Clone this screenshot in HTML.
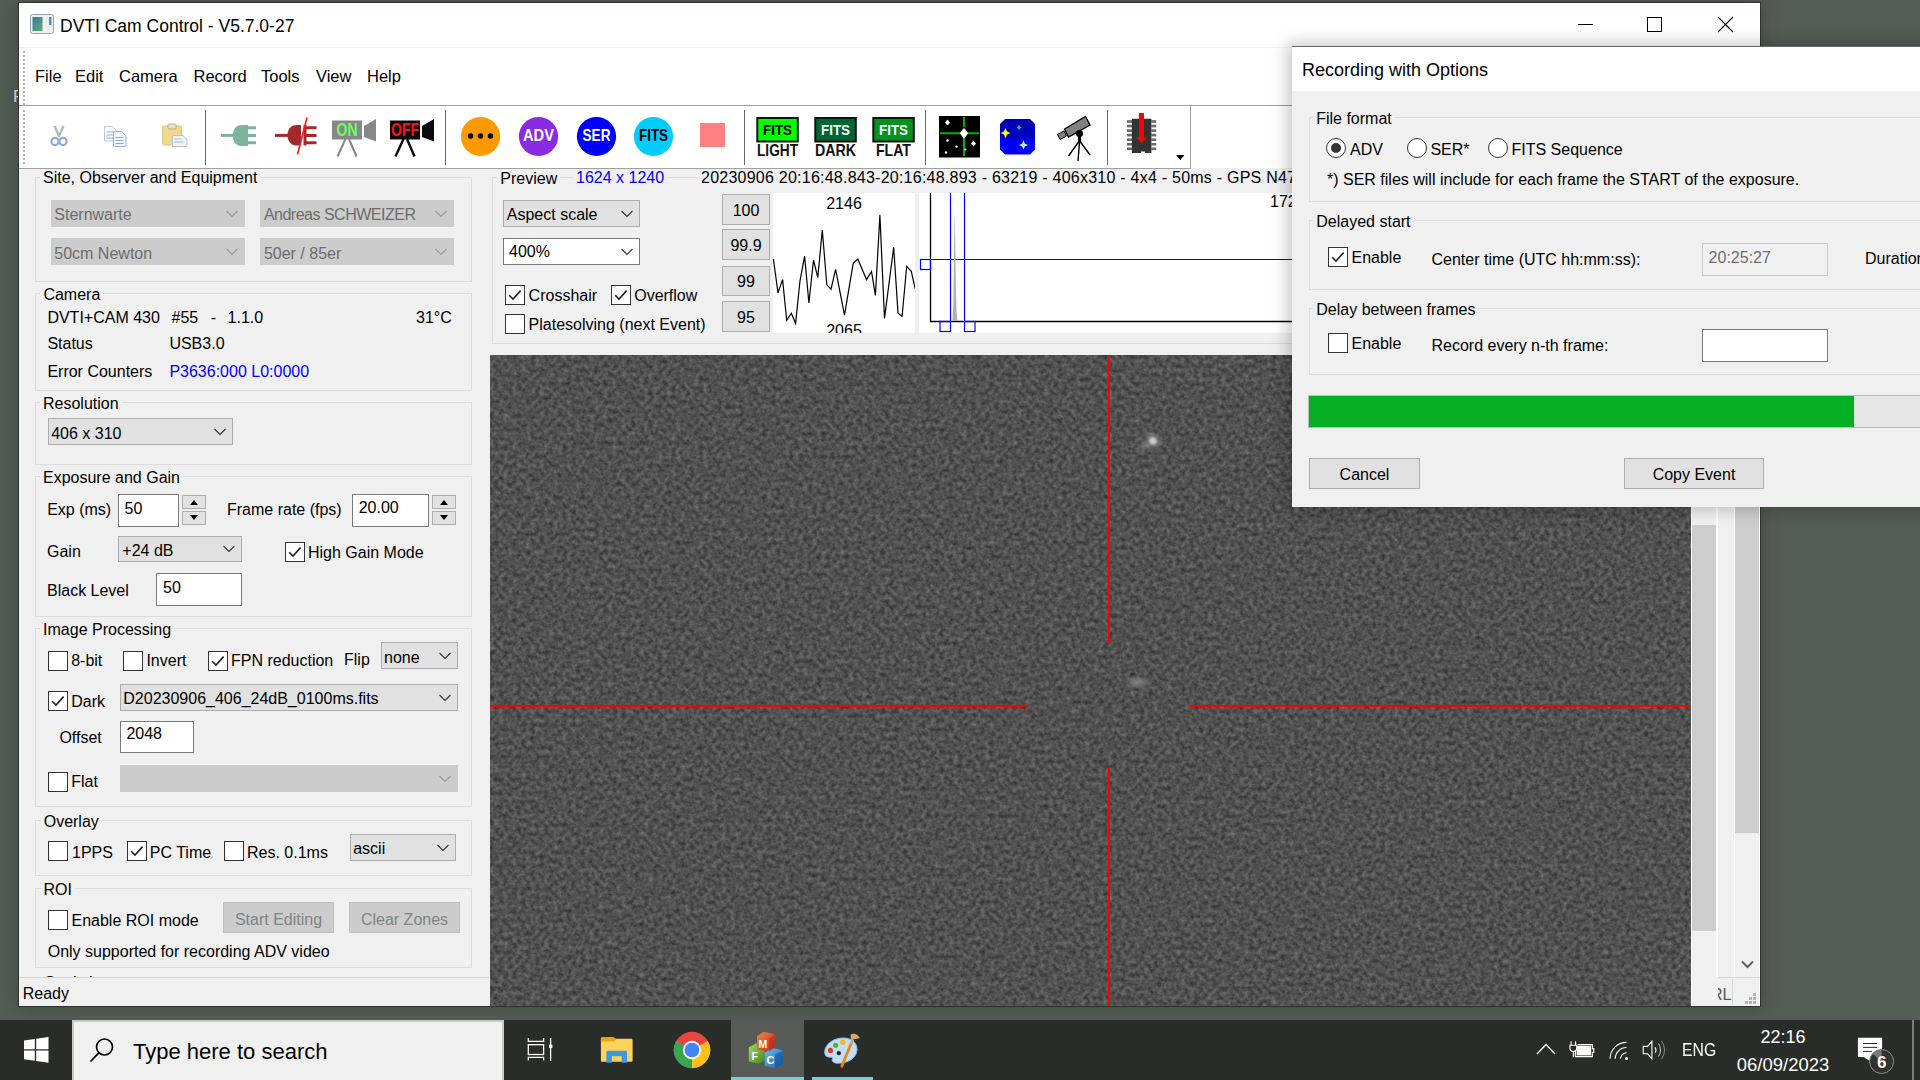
<!DOCTYPE html><html><head><meta charset="utf-8"><title>DVTI Cam Control</title><style>
*{margin:0;padding:0;box-sizing:border-box}
html,body{width:1920px;height:1080px;overflow:hidden}
body{position:relative;background:#535d53;font-family:"Liberation Sans",sans-serif;font-size:16px;color:#000}
.a{position:absolute}
.t{position:absolute;white-space:nowrap;line-height:16px;font-size:16px}
.g{position:absolute;border:1px solid #dcdcdc}
.gl{background:#f0f0f0}
.cb{position:absolute;width:20px;height:20px;border:1px solid #333;background:#fff}
.sp{background:#e1e1e1;border:1px solid #adadad}
.rd{position:absolute;width:20px;height:20px;border:1px solid #333;border-radius:50%;background:#fff}
</style></head><body>
<div class="t" style="left:13px;top:88px;font-size:17px;line-height:17px;color:#e0e0e0">F</div>
<div class="a" style="left:18px;top:2px;width:1743px;height:1005px;box-shadow:0 0 16px 1px rgba(0,0,0,0.22)"></div>
<div class="a" style="left:18px;top:2px;width:1743px;height:1005px;background:#2e342f"></div>
<div class="a" style="left:19px;top:3px;width:1741px;height:1003px;background:#f0f0f0"></div>
<div class="a" style="left:19px;top:3px;width:1741px;height:44px;background:#fff"></div>
<svg class="a" style="left:30px;top:14px" width="24" height="20" viewBox="0 0 24 20"><rect x="0.5" y="0.5" width="23" height="19" rx="2" fill="#eef0f2" stroke="#9aa3aa"/><defs><linearGradient id="gi" x1="0" y1="0" x2="1" y2="1"><stop offset="0" stop-color="#3a78a8"/><stop offset="1" stop-color="#58b068"/></linearGradient></defs><rect x="2.5" y="3" width="10" height="14" fill="url(#gi)"/><rect x="19" y="3" width="2.5" height="8" fill="#4a90c8"/></svg>
<div class="t" style="left:60px;top:17px;font-size:17.5px;line-height:18px">DVTI Cam Control - V5.7.0-27</div>
<div class="a" style="left:1578px;top:24px;width:15px;height:1px;background:#000"></div>
<div class="a" style="left:1647px;top:17px;width:15px;height:15px;border:1px solid #000"></div>
<svg class="a" style="left:1717px;top:16px" width="17" height="17" viewBox="0 0 17 17"><path d="M1 1 L16 16 M16 1 L1 16" stroke="#000" stroke-width="1.1"/></svg>
<div class="a" style="left:19px;top:47px;width:1741px;height:58px;background:#fff"></div>
<div class="a" style="left:19px;top:47px;width:1741px;height:1px;background:#eef3fb"></div>
<div class="a" style="left:23px;top:51px;width:2px;height:2px;background:#b4b4b4"></div>
<div class="a" style="left:23px;top:55px;width:2px;height:2px;background:#b4b4b4"></div>
<div class="a" style="left:23px;top:59px;width:2px;height:2px;background:#b4b4b4"></div>
<div class="a" style="left:23px;top:63px;width:2px;height:2px;background:#b4b4b4"></div>
<div class="a" style="left:23px;top:67px;width:2px;height:2px;background:#b4b4b4"></div>
<div class="a" style="left:23px;top:71px;width:2px;height:2px;background:#b4b4b4"></div>
<div class="a" style="left:23px;top:75px;width:2px;height:2px;background:#b4b4b4"></div>
<div class="a" style="left:23px;top:79px;width:2px;height:2px;background:#b4b4b4"></div>
<div class="a" style="left:23px;top:83px;width:2px;height:2px;background:#b4b4b4"></div>
<div class="a" style="left:23px;top:87px;width:2px;height:2px;background:#b4b4b4"></div>
<div class="a" style="left:23px;top:91px;width:2px;height:2px;background:#b4b4b4"></div>
<div class="a" style="left:23px;top:95px;width:2px;height:2px;background:#b4b4b4"></div>
<div class="a" style="left:23px;top:99px;width:2px;height:2px;background:#b4b4b4"></div>
<div class="a" style="left:23px;top:103px;width:2px;height:2px;background:#b4b4b4"></div>
<div class="t " style="left:35.00px;top:68px;font-size:16.5px">File</div>
<div class="t " style="left:75.00px;top:68px;font-size:16.5px">Edit</div>
<div class="t " style="left:119.00px;top:68px;font-size:16.5px">Camera</div>
<div class="t " style="left:193.50px;top:68px;font-size:16.5px">Record</div>
<div class="t " style="left:261.00px;top:68px;font-size:16.5px">Tools</div>
<div class="t " style="left:316.00px;top:68px;font-size:16.5px">View</div>
<div class="t " style="left:367.00px;top:68px;font-size:16.5px">Help</div>
<div class="a" style="left:19px;top:105px;width:1741px;height:1px;background:#a0a0a0"></div>
<div class="a" style="left:19px;top:106px;width:1741px;height:62px;background:#fff"></div>
<div class="a" style="left:19px;top:168px;width:1172px;height:1px;background:#a0a0a0"></div>
<div class="a" style="left:1190px;top:105px;width:1px;height:64px;background:#a0a0a0"></div>
<div class="a" style="left:23px;top:110px;width:2px;height:2px;background:#b4b4b4"></div>
<div class="a" style="left:23px;top:114px;width:2px;height:2px;background:#b4b4b4"></div>
<div class="a" style="left:23px;top:118px;width:2px;height:2px;background:#b4b4b4"></div>
<div class="a" style="left:23px;top:122px;width:2px;height:2px;background:#b4b4b4"></div>
<div class="a" style="left:23px;top:126px;width:2px;height:2px;background:#b4b4b4"></div>
<div class="a" style="left:23px;top:130px;width:2px;height:2px;background:#b4b4b4"></div>
<div class="a" style="left:23px;top:134px;width:2px;height:2px;background:#b4b4b4"></div>
<div class="a" style="left:23px;top:138px;width:2px;height:2px;background:#b4b4b4"></div>
<div class="a" style="left:23px;top:142px;width:2px;height:2px;background:#b4b4b4"></div>
<div class="a" style="left:23px;top:146px;width:2px;height:2px;background:#b4b4b4"></div>
<div class="a" style="left:23px;top:150px;width:2px;height:2px;background:#b4b4b4"></div>
<div class="a" style="left:23px;top:154px;width:2px;height:2px;background:#b4b4b4"></div>
<div class="a" style="left:23px;top:158px;width:2px;height:2px;background:#b4b4b4"></div>
<div class="a" style="left:23px;top:162px;width:2px;height:2px;background:#b4b4b4"></div>
<div class="a" style="left:205px;top:110px;width:1px;height:55px;background:#6a6a6a"></div>
<div class="a" style="left:445px;top:110px;width:1px;height:55px;background:#6a6a6a"></div>
<div class="a" style="left:744px;top:110px;width:1px;height:55px;background:#6a6a6a"></div>
<div class="a" style="left:925px;top:110px;width:1px;height:55px;background:#6a6a6a"></div>
<div class="a" style="left:1107px;top:110px;width:1px;height:55px;background:#6a6a6a"></div>
<svg class="a" style="left:50px;top:124px" width="18" height="25" viewBox="0 0 18 25"><path d="M4.5 2 L9.5 13 M13.5 2 L8.5 13" stroke="#b4b8bc" stroke-width="2.4" fill="none"/><circle cx="5" cy="17.5" r="3.6" fill="none" stroke="#8fa8e0" stroke-width="2.2"/><circle cx="13" cy="17.5" r="3.6" fill="none" stroke="#8fa8e0" stroke-width="2.2"/></svg>
<svg class="a" style="left:103px;top:125px" width="26" height="23" viewBox="0 0 26 23"><path d="M1.5 1.5 H9.5 L13 5 V16 H1.5Z" fill="#f4f7fc" stroke="#b9c8e6"/><path d="M3.5 7h7M3.5 10h7M3.5 13h7" stroke="#9fb5e6" stroke-width="1"/><path d="M10.5 6.5 H18.5 L23 11 V21.5 H10.5Z" fill="#f4f7fc" stroke="#98b0e4"/><path d="M12.5 12.5h8M12.5 15.5h8M12.5 18.5h8" stroke="#8aa6e0" stroke-width="1.2"/></svg>
<svg class="a" style="left:161px;top:123px" width="28" height="25" viewBox="0 0 28 25"><rect x="1.5" y="3" width="19" height="19" rx="1.5" fill="#f2d88a" stroke="#d9c48a"/><rect x="7" y="1" width="8" height="5" rx="1" fill="#e8e0c0" stroke="#bfb38a"/><path d="M11.5 12.5 H22 L26 16.5 V23.5 H11.5Z" fill="#eef1f6" stroke="#b8bfcc"/><path d="M13.5 16h7M13.5 19h9" stroke="#b0b8c8"/></svg>
<svg class="a" style="left:219px;top:123px" width="40" height="25" viewBox="0 0 40 25"><path d="M2 12.4 H15" stroke="#7db49c" stroke-width="3"/><path d="M14 12.4 C14 5 18 2 23 2 H29 V23 H23 C18 23 14 20 14 12.4Z" fill="#7db49c"/><path d="M28 4.8 H37 M28 12.4 H37 M28 19.8 H37" stroke="#7db49c" stroke-width="3"/></svg>
<svg class="a" style="left:273px;top:115px" width="48" height="42" viewBox="0 0 48 42"><path d="M2 20.4 H16" stroke="#a4282c" stroke-width="3"/><path d="M14.5 20.4 C14.5 13 19 10 24 10 H28 V30.5 H24 C19 30.5 14.5 27 14.5 20.4Z" fill="#a4282c"/><path d="M32 10 V30.5" stroke="#a4282c" stroke-width="3"/><path d="M31 12.7 H43.5 M31 20.4 H43.5 M31 27.8 H43.5" stroke="#a4282c" stroke-width="3"/><path d="M34 2.5 L24.5 39.5" stroke="#ff1a1a" stroke-width="1.6"/></svg>
<svg class="a" style="left:331px;top:117px" width="48" height="42" viewBox="0 0 48 42"><rect x="1" y="3.5" width="30" height="19" fill="#878787"/><path d="M33 9 L45 2 V24.5 L33 20Z" fill="#878787"/><path d="M14.5 22 L6.5 39.5 M18 22 L25.5 39.5" stroke="#878787" stroke-width="2"/><text x="16" y="18.6" text-anchor="middle" font-family="Liberation Sans" font-weight="bold" font-size="17.5" fill="#66ff66" textLength="21" lengthAdjust="spacingAndGlyphs">ON</text></svg>
<svg class="a" style="left:389px;top:117px" width="48" height="42" viewBox="0 0 48 42"><rect x="1" y="3.5" width="30" height="19" fill="#0a0a0a"/><path d="M33 9 L45 2 V24.5 L33 20Z" fill="#0a0a0a"/><path d="M14.5 22 L6.5 39.5 M18 22 L25.5 39.5" stroke="#0a0a0a" stroke-width="2.4"/><text x="16" y="18.6" text-anchor="middle" font-family="Liberation Sans" font-weight="bold" font-size="17.5" fill="#ff1010" textLength="28" lengthAdjust="spacingAndGlyphs">OFF</text></svg>
<svg class="a" style="left:459.7px;top:115.5px" width="41" height="41" viewBox="0 0 41 41"><circle cx="20.5" cy="20.5" r="19.6" fill="#ff9900"/><circle cx="10.5" cy="20" r="2.8" fill="#000"/><circle cx="20.5" cy="20" r="2.8" fill="#000"/><circle cx="30.5" cy="20" r="2.8" fill="#000"/></svg>
<svg class="a" style="left:517.9px;top:115.5px" width="41" height="41" viewBox="0 0 41 41"><circle cx="20.5" cy="20.5" r="19.6" fill="#8a2be2"/><text x="20.5" y="25.3" text-anchor="middle" font-family="Liberation Sans" font-weight="bold" font-size="16.5" fill="#fff" textLength="31" lengthAdjust="spacingAndGlyphs">ADV</text></svg>
<svg class="a" style="left:575.9px;top:115.5px" width="41" height="41" viewBox="0 0 41 41"><circle cx="20.5" cy="20.5" r="19.6" fill="#0000ff"/><text x="20.5" y="25.3" text-anchor="middle" font-family="Liberation Sans" font-weight="bold" font-size="16.5" fill="#fff" textLength="28" lengthAdjust="spacingAndGlyphs">SER</text></svg>
<svg class="a" style="left:633.2px;top:115.5px" width="41" height="41" viewBox="0 0 41 41"><circle cx="20.5" cy="20.5" r="19.6" fill="#00ccff"/><text x="20.5" y="25.3" text-anchor="middle" font-family="Liberation Sans" font-weight="bold" font-size="16.5" fill="#000" textLength="29" lengthAdjust="spacingAndGlyphs">FITS</text></svg>
<div class="a" style="left:700px;top:123px;width:25px;height:24px;background:#ff8080"></div>
<svg class="a" style="left:756px;top:116px" width="44" height="42" viewBox="0 0 44 42"><rect x="1.3" y="2" width="40.5" height="23.5" fill="#00ff00" stroke="#111" stroke-width="2"/><text x="21.5" y="19" text-anchor="middle" font-family="Liberation Sans" font-weight="bold" font-size="15.5" fill="#000" textLength="29" lengthAdjust="spacingAndGlyphs">FITS</text><text x="21.5" y="40.2" text-anchor="middle" font-family="Liberation Sans" font-weight="bold" font-size="16.5" fill="#111" textLength="41" lengthAdjust="spacingAndGlyphs">LIGHT</text></svg>
<svg class="a" style="left:814px;top:116px" width="44" height="42" viewBox="0 0 44 42"><rect x="1.3" y="2" width="40.5" height="23.5" fill="#006633" stroke="#111" stroke-width="2"/><text x="21.5" y="19" text-anchor="middle" font-family="Liberation Sans" font-weight="bold" font-size="15.5" fill="#fff" textLength="29" lengthAdjust="spacingAndGlyphs">FITS</text><text x="21.5" y="40.2" text-anchor="middle" font-family="Liberation Sans" font-weight="bold" font-size="16.5" fill="#111" textLength="41" lengthAdjust="spacingAndGlyphs">DARK</text></svg>
<svg class="a" style="left:872px;top:116px" width="44" height="42" viewBox="0 0 44 42"><rect x="1.3" y="2" width="40.5" height="23.5" fill="#00931e" stroke="#111" stroke-width="2"/><text x="21.5" y="19" text-anchor="middle" font-family="Liberation Sans" font-weight="bold" font-size="15.5" fill="#fff" textLength="29" lengthAdjust="spacingAndGlyphs">FITS</text><text x="21.5" y="40.2" text-anchor="middle" font-family="Liberation Sans" font-weight="bold" font-size="16.5" fill="#111" textLength="35" lengthAdjust="spacingAndGlyphs">FLAT</text></svg>
<svg class="a" style="left:939px;top:116px" width="41" height="42" viewBox="0 0 41 42"><rect x="0" y="0" width="41" height="41.5" fill="#000"/><path d="M25 1 V11 M25 22 V40 M1 17.2 H21 M29 17.2 H40" stroke="#00b000" stroke-width="2"/><path d="M25 12 L29.3 17.2 L25 22.4 L20.7 17.2Z" fill="#fff"/><path d="M8.5 3.5 L11 6.5 L8.5 9.5 L6 6.5Z M34.5 24.5 L37 27.5 L34.5 30.5 L32 27.5Z" fill="#fff"/><circle cx="8.5" cy="24.5" r="1.2" fill="#fff"/><circle cx="17.5" cy="30.6" r="1.2" fill="#fff"/><circle cx="7" cy="36.5" r="1.2" fill="#fff"/><circle cx="26.4" cy="33.5" r="1" fill="#fff"/></svg>
<svg class="a" style="left:1000px;top:119px" width="36" height="36" viewBox="0 0 36 36"><defs><linearGradient id="sky" x1="0" y1="0" x2="0" y2="1"><stop offset="0" stop-color="#0000a8"/><stop offset="0.55" stop-color="#0000c8"/><stop offset="0.6" stop-color="#0000ff"/><stop offset="1" stop-color="#0000ff"/></linearGradient></defs><path d="M5 0 H30 L35 5 V30.5 L30 35.5 H5 L0 30.5 V5Z" fill="url(#sky)"/><path d="M5.5 9 L7 12.6 L10.5 14 L7 15.4 L5.5 19.5 L4 15.4 L0.8 14 L4 12.6Z" fill="#ffff00"/><path d="M19 6 L20 7.6 L21.5 8.5 L20 9.4 L19 11 L18 9.4 L16.5 8.5 L18 7.6Z" fill="#00d0d0"/><path d="M23.5 21.5 L24.8 24.6 L28 26 L24.8 27.4 L23.5 30.5 L22.2 27.4 L19 26 L22.2 24.6Z" fill="#b0ffb0"/></svg>
<svg class="a" style="left:1056px;top:115px" width="40" height="48" viewBox="0 0 40 48"><path d="M1.5 19.5 L8 16 L10.5 21 L4 24.5Z" fill="#808080" stroke="#000" stroke-width="1"/><path d="M8.5 14 L29.5 1.5 L34 10 L12.5 22Z" fill="#808080" stroke="#000" stroke-width="1.3"/><circle cx="23.5" cy="18.5" r="3.6" fill="#000"/><path d="M23.5 20 V27" stroke="#000" stroke-width="3"/><path d="M22.5 27 L12.5 41 M23.5 27 L22 46 M24.5 27 L34 40" stroke="#000" stroke-width="1.4"/></svg>
<svg class="a" style="left:1127px;top:112px" width="34" height="43" viewBox="0 0 34 43"><rect x="0" y="8.20" width="5" height="2.6" fill="#6a6a6a"/><rect x="24.4" y="8.20" width="4.8" height="2.6" fill="#6a6a6a"/><rect x="0" y="12.75" width="5" height="2.6" fill="#6a6a6a"/><rect x="24.4" y="12.75" width="4.8" height="2.6" fill="#6a6a6a"/><rect x="0" y="17.30" width="5" height="2.6" fill="#6a6a6a"/><rect x="24.4" y="17.30" width="4.8" height="2.6" fill="#6a6a6a"/><rect x="0" y="21.85" width="5" height="2.6" fill="#6a6a6a"/><rect x="24.4" y="21.85" width="4.8" height="2.6" fill="#6a6a6a"/><rect x="0" y="26.40" width="5" height="2.6" fill="#6a6a6a"/><rect x="24.4" y="26.40" width="4.8" height="2.6" fill="#6a6a6a"/><rect x="0" y="30.95" width="5" height="2.6" fill="#6a6a6a"/><rect x="24.4" y="30.95" width="4.8" height="2.6" fill="#6a6a6a"/><rect x="0" y="35.50" width="5" height="2.6" fill="#6a6a6a"/><rect x="24.4" y="35.50" width="4.8" height="2.6" fill="#6a6a6a"/><path d="M4.9 6.8 H24.4 V41 H18 V39.5 H14 V41 H4.9Z" fill="#333"/><rect x="12" y="1" width="5" height="25" fill="#ff0000"/><path d="M9 25.5 H20.2 L14.5 31Z" fill="#ff0000"/></svg>
<svg class="a" style="left:1176px;top:155px" width="9" height="6" viewBox="0 0 9 6"><path d="M0 0 H8.5 L4.25 5Z" fill="#000"/></svg>
<div class="a" style="left:19px;top:169px;width:1741px;height:808px;background:#f0f0f0"></div>
<div class="g" style="left:35px;top:177px;width:437px;height:105px;"></div>
<div class="t gl" style="left:40.00px;top:170px;padding:0 3px 0 3px">Site, Observer and Equipment</div>
<div class="a" style="left:51px;top:200px;width:194px;height:27px;background:#cccccc;border:1px solid #cccccc"></div>
<div class="t " style="left:54.30px;top:207px;color:#6d6d6d">Sternwarte</div>
<svg class="a" style="left:226px;top:210px" width="12" height="8" viewBox="0 0 12 8"><path d="M0.5 1 L6 6.5 L11.5 1" fill="none" stroke="#9a9a9a" stroke-width="1.1"/></svg>
<div class="a" style="left:260px;top:200px;width:194px;height:27px;background:#cccccc;border:1px solid #cccccc"></div>
<div class="t " style="left:263.90px;top:207px;color:#6d6d6d;letter-spacing:-0.5px">Andreas SCHWEIZER</div>
<svg class="a" style="left:435px;top:210px" width="12" height="8" viewBox="0 0 12 8"><path d="M0.5 1 L6 6.5 L11.5 1" fill="none" stroke="#9a9a9a" stroke-width="1.1"/></svg>
<div class="a" style="left:51px;top:238px;width:194px;height:27px;background:#cccccc;border:1px solid #cccccc"></div>
<div class="t " style="left:54.30px;top:245.5px;color:#6d6d6d">50cm Newton</div>
<svg class="a" style="left:226px;top:248px" width="12" height="8" viewBox="0 0 12 8"><path d="M0.5 1 L6 6.5 L11.5 1" fill="none" stroke="#9a9a9a" stroke-width="1.1"/></svg>
<div class="a" style="left:260px;top:238px;width:194px;height:27px;background:#cccccc;border:1px solid #cccccc"></div>
<div class="t " style="left:263.90px;top:245.5px;color:#6d6d6d">50er / 85er</div>
<svg class="a" style="left:435px;top:248px" width="12" height="8" viewBox="0 0 12 8"><path d="M0.5 1 L6 6.5 L11.5 1" fill="none" stroke="#9a9a9a" stroke-width="1.1"/></svg>
<div class="g" style="left:35px;top:293px;width:437px;height:98px;"></div>
<div class="t gl" style="left:40.40px;top:287.4px;padding:0 3px 0 3px">Camera</div>
<div class="t " style="left:47.40px;top:310px;">DVTI+CAM 430</div>
<div class="t " style="left:171.50px;top:310px;">#55</div>
<div class="t " style="left:210.80px;top:310px;">-</div>
<div class="t " style="left:227.60px;top:310px;">1.1.0</div>
<div class="t " style="left:416.00px;top:310px;">31°C</div>
<div class="t " style="left:47.40px;top:336px;">Status</div>
<div class="t " style="left:169.40px;top:336px;">USB3.0</div>
<div class="t " style="left:47.40px;top:364px;">Error Counters</div>
<div class="t " style="left:169.40px;top:364px;color:#0000ff">P3636:000 L0:0000</div>
<div class="g" style="left:35px;top:402px;width:437px;height:63px;"></div>
<div class="t gl" style="left:40.00px;top:396.3px;padding:0 3px 0 3px">Resolution</div>
<div class="a" style="left:48px;top:418px;width:185px;height:27px;background:#e1e1e1;border:1px solid #adadad"></div>
<div class="t " style="left:51.20px;top:425.7px;color:#000">406 x 310</div>
<svg class="a" style="left:214px;top:428px" width="12" height="8" viewBox="0 0 12 8"><path d="M0.5 1 L6 6.5 L11.5 1" fill="none" stroke="#333" stroke-width="1.1"/></svg>
<div class="g" style="left:35px;top:476px;width:437px;height:141px;"></div>
<div class="t gl" style="left:40.00px;top:470px;padding:0 3px 0 3px">Exposure and Gain</div>
<div class="t " style="left:47.20px;top:502px;">Exp (ms)</div>
<div class="a" style="left:118px;top:494px;width:61px;height:33px;background:#fff;border:1px solid #7a7a7a"></div>
<div class="t " style="left:124.60px;top:501px;">50</div>
<div class="a sp" style="left:182px;top:495px;width:24px;height:14px"><svg width="22" height="12" viewBox="0 0 22 12" style="position:absolute;left:0;top:0"><path d="M7 9 L11 4 L15 9Z" fill="#000"/></svg></div>
<div class="a sp" style="left:182px;top:511px;width:24px;height:14px"><svg width="22" height="12" viewBox="0 0 22 12" style="position:absolute;left:0;top:0"><path d="M7 3 L11 8 L15 3Z" fill="#000"/></svg></div>
<div class="t " style="left:227.00px;top:502px;">Frame rate (fps)</div>
<div class="a" style="left:352px;top:494px;width:77px;height:33px;background:#fff;border:1px solid #7a7a7a"></div>
<div class="t " style="left:358.70px;top:500.4px;">20.00</div>
<div class="a sp" style="left:432px;top:495px;width:24px;height:14px"><svg width="22" height="12" viewBox="0 0 22 12" style="position:absolute;left:0;top:0"><path d="M7 9 L11 4 L15 9Z" fill="#000"/></svg></div>
<div class="a sp" style="left:432px;top:511px;width:24px;height:14px"><svg width="22" height="12" viewBox="0 0 22 12" style="position:absolute;left:0;top:0"><path d="M7 3 L11 8 L15 3Z" fill="#000"/></svg></div>
<div class="t " style="left:47.00px;top:544px;">Gain</div>
<div class="a" style="left:118px;top:535.5px;width:124px;height:26.5px;background:#e1e1e1;border:1px solid #adadad"></div>
<div class="t " style="left:122.30px;top:543px;color:#000">+24 dB</div>
<svg class="a" style="left:223px;top:545.0px" width="12" height="8" viewBox="0 0 12 8"><path d="M0.5 1 L6 6.5 L11.5 1" fill="none" stroke="#333" stroke-width="1.1"/></svg>
<div class="cb" style="left:285px;top:542px"><svg width="20" height="20" viewBox="0 0 20 20" style="position:absolute;left:-1px;top:-1px"><path d="M4.2 10.2 L8 14 L15.6 5.6" fill="none" stroke="#222" stroke-width="1.6"/></svg></div>
<div class="t " style="left:308.00px;top:545px;">High Gain Mode</div>
<div class="t " style="left:47.00px;top:583px;">Black Level</div>
<div class="a" style="left:156px;top:573px;width:86px;height:33px;background:#fff;border:1px solid #7a7a7a"></div>
<div class="t " style="left:163.00px;top:580px;">50</div>
<div class="g" style="left:35px;top:628px;width:437px;height:179px;"></div>
<div class="t gl" style="left:40.10px;top:622px;padding:0 3px 0 3px">Image Processing</div>
<div class="cb" style="left:48px;top:651px"></div>
<div class="t " style="left:71.20px;top:653.4px;">8-bit</div>
<div class="cb" style="left:123px;top:651px"></div>
<div class="t " style="left:146.40px;top:653.4px;">Invert</div>
<div class="cb" style="left:208px;top:651px"><svg width="20" height="20" viewBox="0 0 20 20" style="position:absolute;left:-1px;top:-1px"><path d="M4.2 10.2 L8 14 L15.6 5.6" fill="none" stroke="#222" stroke-width="1.6"/></svg></div>
<div class="t " style="left:231.00px;top:653.4px;">FPN reduction</div>
<div class="t " style="left:344.00px;top:652.3px;">Flip</div>
<div class="a" style="left:381px;top:642px;width:77px;height:27px;background:#e1e1e1;border:1px solid #adadad"></div>
<div class="t " style="left:384.00px;top:649.7px;color:#000">none</div>
<svg class="a" style="left:439px;top:652px" width="12" height="8" viewBox="0 0 12 8"><path d="M0.5 1 L6 6.5 L11.5 1" fill="none" stroke="#333" stroke-width="1.1"/></svg>
<div class="cb" style="left:48px;top:691px"><svg width="20" height="20" viewBox="0 0 20 20" style="position:absolute;left:-1px;top:-1px"><path d="M4.2 10.2 L8 14 L15.6 5.6" fill="none" stroke="#222" stroke-width="1.6"/></svg></div>
<div class="t " style="left:71.20px;top:693.8px;">Dark</div>
<div class="a" style="left:120px;top:684px;width:338px;height:27px;background:#e1e1e1;border:1px solid #adadad"></div>
<div class="t " style="left:123.30px;top:691.4px;color:#000">D20230906_406_24dB_0100ms.fits</div>
<svg class="a" style="left:439px;top:694px" width="12" height="8" viewBox="0 0 12 8"><path d="M0.5 1 L6 6.5 L11.5 1" fill="none" stroke="#333" stroke-width="1.1"/></svg>
<div class="t " style="left:59.40px;top:730.3px;">Offset</div>
<div class="a" style="left:120px;top:720.5px;width:74px;height:32.5px;background:#fff;border:1px solid #7a7a7a"></div>
<div class="t " style="left:126.40px;top:726.2px;">2048</div>
<div class="cb" style="left:48px;top:772px"></div>
<div class="t " style="left:71.20px;top:774.4px;">Flat</div>
<div class="a" style="left:120px;top:765px;width:338px;height:27px;background:#cccccc;border:1px solid #cccccc"></div>
<svg class="a" style="left:439px;top:775px" width="12" height="8" viewBox="0 0 12 8"><path d="M0.5 1 L6 6.5 L11.5 1" fill="none" stroke="#9a9a9a" stroke-width="1.1"/></svg>
<div class="g" style="left:35px;top:820px;width:437px;height:56px;"></div>
<div class="t gl" style="left:40.70px;top:814px;padding:0 3px 0 3px">Overlay</div>
<div class="cb" style="left:48px;top:841px"></div>
<div class="t " style="left:72.00px;top:845px;">1PPS</div>
<div class="cb" style="left:127px;top:841px"><svg width="20" height="20" viewBox="0 0 20 20" style="position:absolute;left:-1px;top:-1px"><path d="M4.2 10.2 L8 14 L15.6 5.6" fill="none" stroke="#222" stroke-width="1.6"/></svg></div>
<div class="t " style="left:149.80px;top:845px;">PC Time</div>
<div class="cb" style="left:224px;top:841px"></div>
<div class="t " style="left:247.00px;top:845px;">Res. 0.1ms</div>
<div class="a" style="left:350px;top:834px;width:106px;height:27px;background:#e1e1e1;border:1px solid #adadad"></div>
<div class="t " style="left:353.20px;top:841.3px;color:#000">ascii</div>
<svg class="a" style="left:437px;top:844px" width="12" height="8" viewBox="0 0 12 8"><path d="M0.5 1 L6 6.5 L11.5 1" fill="none" stroke="#333" stroke-width="1.1"/></svg>
<div class="g" style="left:35px;top:888px;width:437px;height:80px;"></div>
<div class="t gl" style="left:40.50px;top:882.3px;padding:0 3px 0 3px">ROI</div>
<div class="cb" style="left:48px;top:910px"></div>
<div class="t " style="left:71.50px;top:913.2px;">Enable ROI mode</div>
<div class="a" style="left:223px;top:902px;width:111px;height:31px;background:#cccccc;border:1px solid #bfbfbf"></div>
<div class="t " style="left:78.5px;width:400px;text-align:center;top:911.5px;color:#838383">Start Editing</div>
<div class="a" style="left:349px;top:902px;width:111px;height:31px;background:#cccccc;border:1px solid #bfbfbf"></div>
<div class="t " style="left:204.5px;width:400px;text-align:center;top:911.5px;color:#838383">Clear Zones</div>
<div class="t " style="left:47.70px;top:944px;">Only supported for recording ADV video</div>
<div class="a" style="left:35px;top:968px;width:440px;height:9px;overflow:hidden"><div class="t" style="left:9.5px;top:6.8px">Statistics</div></div>
<div class="a" style="left:19px;top:977px;width:470px;height:1px;background:#d7d7d7"></div>
<div class="a" style="left:19px;top:978px;width:470px;height:28px;background:#f0f0f0"></div>
<div class="t " style="left:22.75px;top:986px;">Ready</div>
<div class="g" style="left:492px;top:177px;width:908px;height:167px;"></div>
<div class="t gl" style="left:497.30px;top:171px;padding:0 3px 0 3px">Preview</div>
<div class="t gl" style="left:573px;top:170.3px;padding:0 3px"><span style="color:#0000ff">1624 x 1240</span></div>
<div class="t gl" style="left:698px;top:170.3px;padding:0 3px;letter-spacing:0.24px">20230906 20:16:48.843-20:16:48.893 - 63219 - 406x310 - 4x4 - 50ms - GPS N47 12.3</div>
<div class="a" style="left:503px;top:200px;width:137px;height:27px;background:#e1e1e1;border:1px solid #adadad"></div>
<div class="t " style="left:506.80px;top:206.8px;color:#000">Aspect scale</div>
<svg class="a" style="left:621px;top:210px" width="12" height="8" viewBox="0 0 12 8"><path d="M0.5 1 L6 6.5 L11.5 1" fill="none" stroke="#333" stroke-width="1.1"/></svg>
<div class="a" style="left:503px;top:238px;width:137px;height:27px;background:#fff;border:1px solid #7a7a7a"></div>
<div class="t " style="left:509.00px;top:244.2px;color:#000">400%</div>
<svg class="a" style="left:621px;top:248px" width="12" height="8" viewBox="0 0 12 8"><path d="M0.5 1 L6 6.5 L11.5 1" fill="none" stroke="#333" stroke-width="1.1"/></svg>
<div class="cb" style="left:505px;top:285px"><svg width="20" height="20" viewBox="0 0 20 20" style="position:absolute;left:-1px;top:-1px"><path d="M4.2 10.2 L8 14 L15.6 5.6" fill="none" stroke="#222" stroke-width="1.6"/></svg></div>
<div class="t " style="left:528.60px;top:288.3px;">Crosshair</div>
<div class="cb" style="left:611px;top:285px"><svg width="20" height="20" viewBox="0 0 20 20" style="position:absolute;left:-1px;top:-1px"><path d="M4.2 10.2 L8 14 L15.6 5.6" fill="none" stroke="#222" stroke-width="1.6"/></svg></div>
<div class="t " style="left:634.20px;top:288.3px;">Overflow</div>
<div class="cb" style="left:505px;top:314px"></div>
<div class="t " style="left:528.60px;top:317.3px;">Platesolving (next Event)</div>
<div class="a" style="left:722px;top:194px;width:48px;height:31px;background:#e1e1e1;border:1px solid #adadad"></div>
<div class="t " style="left:546px;width:400px;text-align:center;top:202.9px;">100</div>
<div class="a" style="left:722px;top:229px;width:48px;height:31px;background:#e1e1e1;border:1px solid #adadad"></div>
<div class="t " style="left:546px;width:400px;text-align:center;top:237.7px;">99.9</div>
<div class="a" style="left:722px;top:265.5px;width:48px;height:30.5px;background:#e1e1e1;border:1px solid #adadad"></div>
<div class="t " style="left:546px;width:400px;text-align:center;top:274.2px;">99</div>
<div class="a" style="left:722px;top:301px;width:48px;height:31px;background:#e1e1e1;border:1px solid #adadad"></div>
<div class="t " style="left:546px;width:400px;text-align:center;top:309.9px;">95</div>
<div class="a" style="left:773px;top:193px;width:142px;height:140px;background:#fff;overflow:hidden"><svg width="142" height="140" style="position:absolute;left:0;top:0"><polyline points="0.4,66.1 5.0,99.8 9.6,86.6 13.7,127.3 18.3,120.2 22.6,130.3 27.0,87.8 31.6,63.1 35.9,110.0 40.5,67.2 44.8,84.5 49.3,37.1 53.8,91.7 58.0,96.2 62.6,76.4 71.5,122.2 80.2,70.3 84.8,66.1 93.5,86.6 98.5,78.4 102.4,102.4 106.9,22.1 111.5,125.3 120.7,54.2 125.0,119.9 129.1,123.4 133.7,73.3 138.3,78.4 142.1,95.5" fill="none" stroke="#000" stroke-width="1.2"/></svg><div class="t" style="left:0;width:142px;text-align:center;top:2.8px">2146</div><div class="t" style="left:0;width:142px;text-align:center;top:129.6px">2065</div></div>
<div class="a" style="left:919px;top:193px;width:400px;height:140px;background:#fff;overflow:hidden"><svg width="400" height="140" style="position:absolute;left:0;top:0"><path d="M11.5 0 V128.5 H400" fill="none" stroke="#000" stroke-width="1.3"/><path d="M31.5 0 V128 M45.5 0 V128 M1 66.5 H400" stroke="#0000ff" stroke-width="1.2" fill="none"/><rect x="1.5" y="66.5" width="10" height="10" fill="none" stroke="#0000ff" stroke-width="1.2"/><rect x="21" y="128.5" width="10.5" height="10" fill="none" stroke="#0000ff" stroke-width="1.2"/><rect x="45.5" y="128.5" width="10.5" height="10" fill="none" stroke="#0000ff" stroke-width="1.2"/><path d="M33.5 128 L34.3 112 L34.8 80 L35.5 18 L36.3 50 L36.8 90 L37.5 118 L38.5 128Z" fill="#b0b0b0"/></svg><div class="t" style="left:351px;top:1px">172</div></div>
<div class="a" style="left:490px;top:355px;width:1201px;height:651px;background:#3a3a3a;overflow:hidden"><svg width="1201" height="651" style="position:absolute;left:0;top:0"><filter id="nz" x="0" y="0" width="100%" height="100%" color-interpolation-filters="sRGB"><feTurbulence type="fractalNoise" baseFrequency="0.22" numOctaves="3" seed="7"/><feColorMatrix type="matrix" values="1 0 0 0 0  1 0 0 0 0  1 0 0 0 0  0 0 0 0 0.33"/></filter><rect width="1201" height="651" filter="url(#nz)"/></svg><div class="a" style="left:0;top:350px;width:538px;height:2px;background:#ff0000"></div><div class="a" style="left:700px;top:350px;width:500px;height:2px;background:#ff0000"></div><div class="a" style="left:618px;top:0;width:2px;height:289px;background:#ff0000"></div><div class="a" style="left:618px;top:413px;width:2px;height:238px;background:#ff0000"></div><div class="a" style="left:651px;top:74px;width:24px;height:24px;background:radial-gradient(circle at 12px 12px,rgba(210,210,210,1) 0,rgba(195,195,195,0.95) 2.5px,rgba(150,150,150,0.55) 5px,rgba(80,80,80,0) 9px)"></div><div class="a" style="left:647px;top:83px;width:16px;height:16px;background:radial-gradient(circle at 8px 8px,rgba(150,150,150,0.6) 0,rgba(80,80,80,0) 7px)"></div><div class="a" style="left:635px;top:321px;width:26px;height:13px;border-radius:50%;background:radial-gradient(ellipse,rgba(140,140,140,0.8) 0,rgba(130,130,130,0.5) 40%,rgba(80,80,80,0) 72%)"></div></div>
<div class="a" style="left:1691px;top:355px;width:69px;height:651px;background:#f0f0f0"></div>
<div class="a" style="left:1691px;top:355px;width:1px;height:651px;background:#fff"></div>
<div class="a" style="left:1692px;top:525px;width:24px;height:406px;background:#cdcdcd"></div>
<div class="a" style="left:1716px;top:355px;width:2px;height:622px;background:#fff"></div>
<div class="a" style="left:1734px;top:355px;width:1px;height:622px;background:#fff"></div>
<div class="a" style="left:1735px;top:355px;width:24px;height:478px;background:#cdcdcd"></div>
<div class="a" style="left:1759px;top:355px;width:1px;height:651px;background:#fff"></div>
<svg class="a" style="left:1741px;top:960px" width="13" height="9" viewBox="0 0 13 9"><path d="M1 1.5 L6.5 7 L12 1.5" fill="none" stroke="#606060" stroke-width="2"/></svg>
<div class="a" style="left:1718px;top:977px;width:42px;height:1px;background:#d7d7d7"></div>
<div class="a" style="left:1718px;top:978px;width:41px;height:28px;background:#f0f0f0"></div>
<div class="a" style="left:1732px;top:979px;width:1px;height:26px;background:#d7d7d7"></div>
<div class="a" style="left:1718px;top:980px;width:14px;height:24px;overflow:hidden"><div class="t" style="left:-7px;top:7px;color:#555">RL</div></div>
<div class="a" style="left:1753.0px;top:993.0px;width:3.0px;height:3.0px;background:#b5b5b5"></div>
<div class="a" style="left:1749.0px;top:997.0px;width:3.0px;height:3.0px;background:#b5b5b5"></div>
<div class="a" style="left:1753.0px;top:997.0px;width:3.0px;height:3.0px;background:#b5b5b5"></div>
<div class="a" style="left:1745.0px;top:1001.0px;width:3.0px;height:3.0px;background:#b5b5b5"></div>
<div class="a" style="left:1749.0px;top:1001.0px;width:3.0px;height:3.0px;background:#b5b5b5"></div>
<div class="a" style="left:1753.0px;top:1001.0px;width:3.0px;height:3.0px;background:#b5b5b5"></div>
<div class="a" style="left:1292px;top:46px;width:640px;height:461px;box-shadow:-2px 0 16px 3px rgba(0,0,0,0.22)"></div>
<div class="a" style="left:1292px;top:46px;width:628px;height:461px;background:#f0f0f0;border-top:1px solid #666"></div>
<div class="a" style="left:1292px;top:47px;width:628px;height:44px;background:#fff"></div>
<div class="t" style="left:1302px;top:61px;font-size:18px;line-height:18px">Recording with Options</div>
<div class="g" style="left:1309px;top:117px;width:631px;height:85px;"></div>
<div class="t gl" style="left:1313.20px;top:111px;padding:0 3px 0 3px">File format</div>
<div class="rd" style="left:1326px;top:138px"><div style="position:absolute;left:4px;top:4px;width:10px;height:10px;border-radius:50%;background:#333"></div></div>
<div class="t " style="left:1350.00px;top:141.6px;">ADV</div>
<div class="rd" style="left:1407px;top:138px"></div>
<div class="t " style="left:1430.40px;top:141.6px;">SER*</div>
<div class="rd" style="left:1488px;top:138px"></div>
<div class="t " style="left:1511.50px;top:141.6px;">FITS Sequence</div>
<div class="t " style="left:1327.00px;top:171.5px;">*) SER files will include for each frame the START of the exposure.</div>
<div class="g" style="left:1309px;top:220px;width:631px;height:70px;"></div>
<div class="t gl" style="left:1313.30px;top:213.6px;padding:0 3px 0 3px">Delayed start</div>
<div class="cb" style="left:1328px;top:247px"><svg width="20" height="20" viewBox="0 0 20 20" style="position:absolute;left:-1px;top:-1px"><path d="M4.2 10.2 L8 14 L15.6 5.6" fill="none" stroke="#222" stroke-width="1.6"/></svg></div>
<div class="t " style="left:1351.50px;top:250.2px;">Enable</div>
<div class="t " style="left:1431.50px;top:251.5px;">Center time (UTC hh:mm:ss):</div>
<div class="a" style="left:1702px;top:243px;width:126px;height:33px;background:#f0f0f0;border:1px solid #cccccc"></div>
<div class="t " style="left:1708.60px;top:249.7px;color:#6d6d6d">20:25:27</div>
<div class="t " style="left:1865.00px;top:251.2px;">Duration (s):</div>
<div class="g" style="left:1309px;top:308px;width:631px;height:67px;"></div>
<div class="t gl" style="left:1313.30px;top:302.1px;padding:0 3px 0 3px">Delay between frames</div>
<div class="cb" style="left:1328px;top:333px"></div>
<div class="t " style="left:1351.50px;top:336.4px;">Enable</div>
<div class="t " style="left:1431.50px;top:337.5px;">Record every n-th frame:</div>
<div class="a" style="left:1702px;top:329px;width:126px;height:33px;background:#fff;border:1px solid #7a7a7a"></div>
<div class="a" style="left:1308px;top:395px;width:632px;height:33px;background:#e6e6e6;border:1px solid #bcbcbc"></div>
<div class="a" style="left:1309px;top:396px;width:545px;height:31px;background:#06b025"></div>
<div class="a" style="left:1309px;top:458px;width:111px;height:31px;background:#e1e1e1;border:1px solid #adadad"></div>
<div class="t " style="left:1164.5px;width:400px;text-align:center;top:467px;">Cancel</div>
<div class="a" style="left:1624px;top:458px;width:140px;height:31px;background:#e1e1e1;border:1px solid #adadad"></div>
<div class="t " style="left:1494.0px;width:400px;text-align:center;top:467px;">Copy Event</div>
<div class="a" style="left:0px;top:1020px;width:1920px;height:60px;background:#282d29"></div>
<svg class="a" style="left:24px;top:1037px" width="25" height="26" viewBox="0 0 25 26"><path d="M0 3.5 L10.8 2 V12.2 H0Z M12.2 1.8 L24.5 0 V12.2 H12.2Z M0 13.6 H10.8 V23.8 L0 22.3Z M12.2 13.6 H24.5 V25.8 L12.2 24Z" fill="#fff"/></svg>
<div class="a" style="left:72px;top:1020px;width:432px;height:60px;background:#f0f0f0;border:2px solid #c8c8c8;border-bottom:none"></div>
<svg class="a" style="left:89px;top:1037px" width="26" height="27" viewBox="0 0 26 27"><circle cx="15.5" cy="10" r="8" fill="none" stroke="#000" stroke-width="1.6"/><path d="M9.8 15.8 L1.5 24.5" stroke="#000" stroke-width="1.8"/></svg>
<div class="t" style="left:133px;top:1041px;font-size:22px;line-height:22px;color:#000">Type here to search</div>
<svg class="a" style="left:520px;top:1030px" width="40" height="40" viewBox="520 1030 40 40"><path d="M528.3 1038 V1041.4 H543.6 V1038 M528.3 1060.6 V1057.3 H543.6 V1060.6" fill="none" stroke="#fff" stroke-width="1.3"/><rect x="528.3" y="1044.7" width="15.3" height="9.8" fill="none" stroke="#fff" stroke-width="1.3"/><path d="M550.6 1038 V1061" stroke="#fff" stroke-width="1.3"/><rect x="549" y="1044.7" width="3.4" height="3.4" fill="#fff"/></svg>
<svg class="a" style="left:595px;top:1030px" width="45" height="40" viewBox="595 1030 45 40"><rect x="600.9" y="1038.8" width="31.7" height="22.9" rx="1.3" fill="#ffd35a"/><path d="M600.9 1038.3 Q600.9 1037 602.2 1037 H613.5 L616 1039.3 Q615 1041.5 613 1041.5 H600.9Z" fill="#e3a514"/><path d="M606.4 1062.7 V1052 Q606.4 1050.7 607.7 1050.7 H625.8 Q627.1 1050.7 627.1 1052 V1062.7 H621.7 V1056.2 H611.8 V1062.7Z" fill="#3f98de"/></svg>
<svg class="a" style="left:673px;top:1031px" width="38" height="38" viewBox="0 0 38 38"><circle cx="19" cy="19" r="18.2" fill="#e8453c"/><path d="M19 19 L3.2 28.1 A18.2 18.2 0 0 0 19 37.2 Z" fill="#34a853"/><path d="M19 19 L3.2 9.9 A18.2 18.2 0 0 0 3.2 28.1 Z" fill="#34a853"/><path d="M19 19 L34.8 9.9 A18.2 18.2 0 0 1 19 37.2 Z" fill="#fbc116"/><circle cx="19" cy="19" r="9.2" fill="#fff"/><circle cx="19" cy="19" r="7.3" fill="#4285f4"/></svg>
<div class="a" style="left:731px;top:1020px;width:73px;height:60px;background:#575a57"></div>
<div class="a" style="left:731px;top:1077px;width:73px;height:3px;background:#76cfd2"></div>
<div class="a" style="left:812px;top:1077px;width:61px;height:3px;background:#76cfd2"></div>
<svg class="a" style="left:740px;top:1025px" width="130" height="50" viewBox="0 0 130 50"><defs><linearGradient id="gG" x1="0" y1="0" x2="1" y2="1"><stop offset="0" stop-color="#a8d860"/><stop offset="1" stop-color="#3f8a1e"/></linearGradient><linearGradient id="gR" x1="0" y1="0" x2="1" y2="1"><stop offset="0" stop-color="#f4864a"/><stop offset="1" stop-color="#c0281a"/></linearGradient><linearGradient id="gB" x1="0" y1="0" x2="1" y2="1"><stop offset="0" stop-color="#6cc0ee"/><stop offset="1" stop-color="#1660b0"/></linearGradient></defs><path d="M8.8 22.3 L16.9 18 L24.7 20 V36 L18 38.6 L8.8 36.5Z" fill="url(#gG)"/><path d="M17 11.2 L23.5 6.8 L35.2 9.2 V22.5 L29 26.8 L17 24.5Z" fill="url(#gR)"/><path d="M24.7 27.5 L33 23 L43 25.5 V39 L35 43 L24.7 40.5Z" fill="url(#gB)"/><path d="M35.2 9.2 V22.5 L29 26.8 V13.5Z" fill="#b32818" opacity="0.55"/><path d="M43 25.5 V39 L35 43 V29.5Z" fill="#0e4e96" opacity="0.55"/><text x="22.8" y="23" text-anchor="middle" font-family="Liberation Sans" font-weight="bold" font-size="10.5" fill="#fff">M</text><text x="14.8" y="34.5" text-anchor="middle" font-family="Liberation Sans" font-weight="bold" font-size="10.5" fill="#fff">F</text><text x="30.5" y="38.5" text-anchor="middle" font-family="Liberation Sans" font-weight="bold" font-size="11" fill="#fff">C</text><path d="M86 31 C82 25 88 15 100 13.2 C110 11.8 117.5 17 117 25 C116.5 33 108 38.5 97 38.2 C93 38 91.5 36 92.5 33.5 C93.5 31 89.5 33.5 86 31Z" fill="#c2def2" stroke="#8cbce4" stroke-width="1"/><circle cx="98.8" cy="28.1" r="2.2" fill="#1e2a30"/><circle cx="90.4" cy="25.4" r="2.6" fill="#e53a2a"/><circle cx="95.6" cy="20.3" r="2.6" fill="#4cb830"/><circle cx="102.8" cy="17.3" r="2.7" fill="#f6b820"/><path d="M101.8 41.3 L111.8 17" stroke="#e8861c" stroke-width="2.8" stroke-linecap="round"/><path d="M110.5 18.5 L113 14.5" stroke="#b0b0b0" stroke-width="2.6"/><path d="M111 15 L110.5 9.5 Q116 7 120 13 Z" fill="#d8a868"/></svg>
<svg class="a" style="left:1536px;top:1043px" width="20" height="12" viewBox="0 0 20 12"><path d="M1 11 L10 1.5 L19 11" fill="none" stroke="#fff" stroke-width="1.3"/></svg>
<svg class="a" style="left:1560px;top:1035px" width="110" height="30" viewBox="1560 1035 110 30"><path d="M1577.5 1044.6 H1592.4 V1048.6 H1593.8 V1052.4 H1592.4 V1056.6 H1575.4 V1050" fill="none" stroke="#fff" stroke-width="1.1"/><rect x="1576.6" y="1045.8" width="14.6" height="9.6" fill="#fff"/><path d="M1571.1 1041.3 V1045 M1575.6 1041.3 V1045 M1569.9 1045.2 H1576.8 V1047.5 Q1576.8 1051.5 1573.35 1051.5 Q1569.9 1051.5 1569.9 1047.5Z M1573.35 1051.5 V1057.2" fill="none" stroke="#fff" stroke-width="1.1"/><path d="M1610.1 1058.8 A16.4 16.4 0 0 1 1626.5 1042.4 M1615.2 1058.8 A11.3 11.3 0 0 1 1626.5 1047.5 M1620.5 1058.8 A6 6 0 0 1 1626.5 1052.8" fill="none" stroke="#fff" stroke-width="1.1"/><circle cx="1626.5" cy="1058.5" r="1.5" fill="#fff"/><path d="M1643.2 1046.4 H1647.6 L1651.9 1041.3 V1058.8 L1647.6 1053.8 H1643.2Z" fill="none" stroke="#fff" stroke-width="1.1"/><path d="M1655 1047.2 Q1657 1050 1655 1052.8" fill="none" stroke="#fff" stroke-width="1.1"/><path d="M1658.5 1043.5 Q1662.5 1050 1658.5 1056.5" fill="none" stroke="#c8c8c8" stroke-width="1"/><path d="M1661.5 1040.8 Q1667.5 1050 1661.5 1059.2" fill="none" stroke="#8a8a8a" stroke-width="1"/></svg>
<div class="t" style="left:1682px;top:1042px;font-size:17.5px;line-height:17px;color:#fff;transform:scaleX(0.9);transform-origin:0 0">ENG</div>
<div class="t" style="left:1741px;width:84px;text-align:center;top:1028px;font-size:18px;line-height:18px;color:#fff">22:16</div>
<div class="t" style="left:1733px;width:100px;text-align:center;top:1055.5px;font-size:18.5px;line-height:18px;color:#fff">06/09/2023</div>
<svg class="a" style="left:1856px;top:1036px" width="42" height="42" viewBox="0 0 42 42"><path d="M1.9 1.8 H26.1 V21.1 H15.5 L16.5 27 L7.8 21.1 H1.9Z" fill="#fff"/><path d="M7.2 7.5 H21 M7.2 11.4 H21 M7.2 15.4 H16" stroke="#282d29" stroke-width="1"/><path d="M25.6 13.8 A11.7 11.7 0 0 0 13.9 25.5 L25.6 25.5Z" fill="#888"/><circle cx="25.6" cy="25.5" r="12" fill="#323232" stroke="#8a8d8a" stroke-width="1"/><path d="M25.6 13.5 A12 12 0 0 0 16.5 17.7 L25.6 25.5Z" fill="#7a7a7a"/><text x="25.8" y="31.8" text-anchor="middle" font-family="Liberation Sans" font-weight="bold" font-size="17" fill="#fff">6</text></svg>
<div class="a" style="left:1912px;top:1020px;width:2px;height:60px;background:#7a7d7a"></div>
</body></html>
